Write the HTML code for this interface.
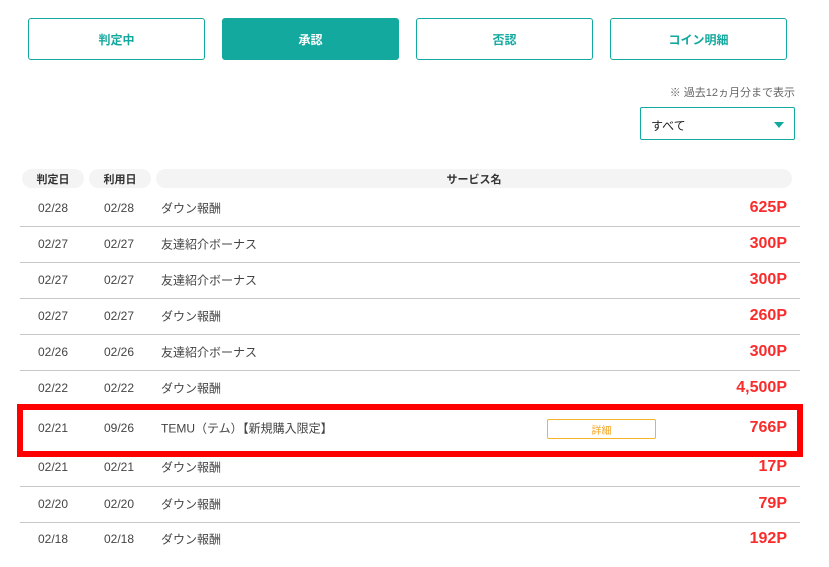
<!DOCTYPE html>
<html><head><meta charset="utf-8"><style>
*{margin:0;padding:0;box-sizing:border-box}
body{width:829px;height:567px;background:#fff;position:relative;overflow:hidden;font-family:"Liberation Sans","Noto Sans CJK JP",sans-serif;color:#333}
.a{position:absolute}
.btn{position:absolute;top:18px;height:42px;width:177px;border:1px solid #14a99f;border-radius:3px;color:#14a99f;font-weight:bold;font-size:12px;display:flex;align-items:center;justify-content:center}
.pill{position:absolute;top:169px;height:19px;background:#f4f4f4;border-radius:10px;font-size:11px;font-weight:bold;display:flex;align-items:center;justify-content:center;color:#333}
.row{position:absolute;left:20px;width:780px;height:36px;font-size:12px;color:#444}
.row span{position:absolute;top:50%;transform:translateY(-50%)}
.line{position:absolute;left:20px;width:780px;height:1px;background:#c8c8c8}
.pt{right:13px;color:#fa2b2b;font-weight:bold;font-size:16px}
</style></head><body>
<div class="btn" style="left:28px">判定中</div>
<div class="btn" style="left:222px;background:#14a99f;color:#fff">承認</div>
<div class="btn" style="left:416px">否認</div>
<div class="btn" style="left:610px">コイン明細</div>
<div class="a" style="right:34px;top:84px;font-size:11px;color:#666">※ 過去12ヵ月分まで表示</div>
<div class="a" style="left:640px;top:107px;width:155px;height:33px;border:1px solid #14a99f;border-radius:2px;font-size:12px;padding:9px 0 0 10px;color:#222">すべて
<div class="a" style="right:10px;top:14px;width:0;height:0;border-left:5px solid transparent;border-right:5px solid transparent;border-top:6px solid #14a99f"></div></div>
<div class="pill" style="left:22px;width:62px">判定日</div>
<div class="pill" style="left:89px;width:62px">利用日</div>
<div class="pill" style="left:156px;width:636px">サービス名</div>

<div class="row" style="top:190px"><span style="left:18px">02/28</span><span style="left:84px">02/28</span><span style="left:141px">ダウン報酬</span><span class="pt">625P</span></div>
<div class="line" style="top:226px"></div>
<div class="row" style="top:226px"><span style="left:18px">02/27</span><span style="left:84px">02/27</span><span style="left:141px">友達紹介ボーナス</span><span class="pt">300P</span></div>
<div class="line" style="top:262px"></div>
<div class="row" style="top:262px"><span style="left:18px">02/27</span><span style="left:84px">02/27</span><span style="left:141px">友達紹介ボーナス</span><span class="pt">300P</span></div>
<div class="line" style="top:298px"></div>
<div class="row" style="top:298px"><span style="left:18px">02/27</span><span style="left:84px">02/27</span><span style="left:141px">ダウン報酬</span><span class="pt">260P</span></div>
<div class="line" style="top:334px"></div>
<div class="row" style="top:334px"><span style="left:18px">02/26</span><span style="left:84px">02/26</span><span style="left:141px">友達紹介ボーナス</span><span class="pt">300P</span></div>
<div class="line" style="top:370px"></div>
<div class="row" style="top:370px"><span style="left:18px">02/22</span><span style="left:84px">02/22</span><span style="left:141px">ダウン報酬</span><span class="pt">4,500P</span></div>
<div class="a" style="left:17px;top:404px;width:786px;height:53px;border:6px solid #f00"></div>
<div class="row" style="top:410px;height:36px"><span style="left:18px">02/21</span><span style="left:84px">09/26</span><span style="left:141px">TEMU（テム）【新規購入限定】</span><span class="pt">766P</span></div>
<div class="a" style="left:547px;top:419px;width:109px;height:20px;border:1px solid #f5b42a;border-radius:2px;font-size:10px;color:#f5a623;display:flex;align-items:center;justify-content:center">詳細</div>
<div class="row" style="top:448px;height:38px"><span style="left:18px">02/21</span><span style="left:84px">02/21</span><span style="left:141px">ダウン報酬</span><span class="pt">17P</span></div>
<div class="line" style="top:486px"></div>
<div class="row" style="top:486px"><span style="left:18px">02/20</span><span style="left:84px">02/20</span><span style="left:141px">ダウン報酬</span><span class="pt">79P</span></div>
<div class="line" style="top:522px"></div>
<div class="row" style="top:521px"><span style="left:18px">02/18</span><span style="left:84px">02/18</span><span style="left:141px">ダウン報酬</span><span class="pt">192P</span></div>
</body></html>
